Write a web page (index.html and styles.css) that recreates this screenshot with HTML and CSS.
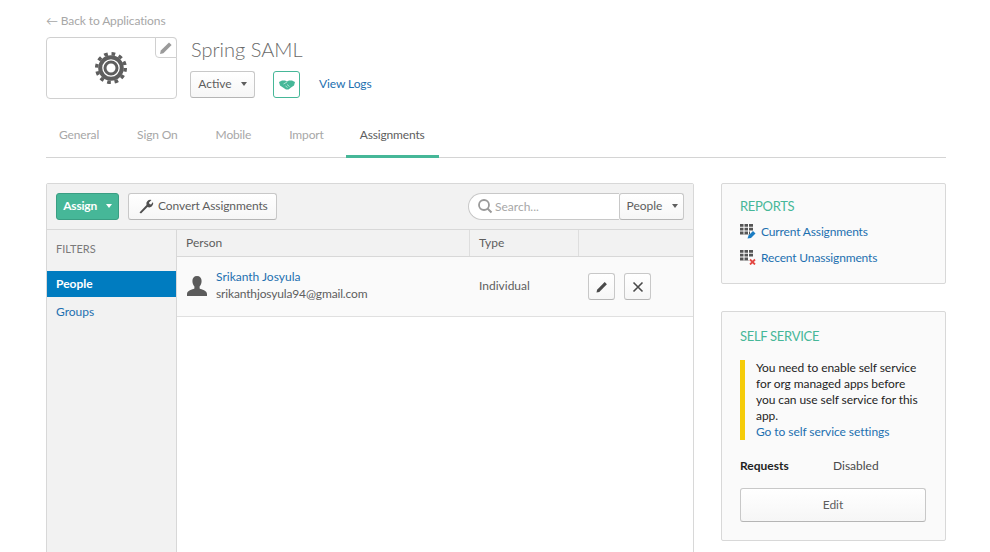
FILE: index.html
```html
<!DOCTYPE html>
<html lang="en">
<head>
    <meta charset="UTF-8">
    <title>Spring SAML - Assignments</title>
    <link rel="stylesheet" href="styles.css">
</head>
<body>
    <div class="page">
        <a class="back-link">&larr; Back to Applications</a>

        <div class="app-head">
            <div class="app-logo">
                <svg class="gear" width="32" height="32" viewBox="0 0 32 32">
                    <circle cx="16" cy="16" r="14.3" fill="none" stroke="#5e5e5e" stroke-width="3.4" stroke-dasharray="3.7 3.8"/>
                    <circle cx="16" cy="16" r="10.8" fill="none" stroke="#5e5e5e" stroke-width="4"/>
                    <circle cx="16" cy="16" r="6" fill="none" stroke="#5e5e5e" stroke-width="3"/>
                </svg>
                <span class="logo-edit">
                    <svg width="14" height="14" viewBox="0 0 14 14"><path d="M1 13l.8-3.400L10 1.400l2.600 2.600-8.200 8.200z" fill="#9a9a9a"/></svg>
                </span>
            </div>
            <div class="app-info">
                <h1>Spring SAML</h1>
                <div class="app-actions">
                    <button class="btn btn-status">Active <i class="caret"></i></button>
                    <span class="btn-hand">
                        <svg width="16" height="10" viewBox="0 0 16 10"><path d="M0 2L3 .5h3L8 1.500 10 .5h3L16 2l-1 3.500-3 2-2.500 2H7L4 7.500 1 5.500z" fill="#46b798"/><path d="M4.500 4L8 2M6.500 6l2 1.500M8 4.500l2.500 2" stroke="#bfe6da" stroke-width=".9" fill="none"/></svg>
                    </span>
                    <a class="link view-logs">View Logs</a>
                </div>
            </div>
        </div>

        <nav class="tabs">
            <a class="tab">General</a>
            <a class="tab">Sign On</a>
            <a class="tab">Mobile</a>
            <a class="tab">Import</a>
            <a class="tab active">Assignments</a>
        </nav>

        <div class="content">
            <section class="panel">
                <div class="toolbar">
                    <button class="btn btn-green">Assign <i class="caret"></i></button>
                    <button class="btn btn-convert">
                        <svg width="16" height="16" viewBox="0 0 16 16"><path d="M1.500 14.500l7-7.500a4 4 0 0 1 5-5L11 4.500l.5 1.500 1.500.5 2-2.500a4 4 0 0 1-5.500 5L3 15.500z" fill="#4f4f4f"/></svg>
                        Convert Assignments
                    </button>
                    <div class="search-group">
                        <div class="search">
                            <svg width="16" height="16" viewBox="0 0 16 16"><circle cx="7" cy="7" r="5" fill="none" stroke="#9a9a9a" stroke-width="1.800"/><path d="M10.500 10.500l4 4" stroke="#9a9a9a" stroke-width="2"/></svg>
                            <span>Search...</span>
                        </div>
                        <button class="btn btn-people">People <i class="caret"></i></button>
                    </div>
                </div>
                <div class="panel-body">
                    <aside class="filters">
                        <div class="filters-title">FILTERS</div>
                        <a class="filter active">People</a>
                        <a class="filter">Groups</a>
                    </aside>
                    <div class="table">
                        <div class="table-row table-header">
                            <div class="col-person">Person</div>
                            <div class="col-type">Type</div>
                            <div class="col-actions"></div>
                        </div>
                        <div class="table-row table-item">
                            <div class="col-person">
                                <svg class="person-icon" width="20" height="20" viewBox="0 0 20 20"><path d="M10 0c3 0 4.600 2 4.600 5 0 2.500-1 4.500-2 5.500v2c2 1 7.400 2 7.400 5.500v2H0v-2c0-3.500 5.400-4.500 7.400-5.500v-2c-1-1-2-3-2-5.500C5.400 2 7 0 10 0z" fill="#5b5b5b"/></svg>
                                <div class="person-text">
                                    <a class="link">Srikanth Josyula</a>
                                    <span>srikanthjosyula94@gmail.com</span>
                                </div>
                            </div>
                            <div class="col-type">Individual</div>
                            <div class="col-actions">
                                <span class="btn-icon"><svg width="14" height="14" viewBox="0 0 14 14"><path d="M1.500 12.500l.6-2.800 7.600-7.600 2.200 2.200-7.600 7.600z" fill="#4a4a4a"/></svg></span>
                                <span class="btn-icon"><svg width="14" height="14" viewBox="0 0 14 14"><path d="M2.500 2.500l9 9M11.500 2.500l-9 9" stroke="#4a4a4a" stroke-width="1.600"/></svg></span>
                            </div>
                        </div>
                    </div>
                </div>
            </section>

            <aside class="sidebar">
                <div class="card card-reports">
                    <h2>REPORTS</h2>
                    <a class="report-link">
                        <svg width="16" height="16" viewBox="0 0 16 16">
                            <path d="M0 1h13v2.800H0zM0 4.800h13v2.800H0zM0 8.600h10v2.800H0z" fill="#555"/>
                            <path d="M4 1v10.400M8.500 1v10.400" stroke="#fff" stroke-width="1"/>
                            <path d="M7.500 15.500l1-3 4.500-4.500 2.500 2.500-4.500 4.500z" fill="#1a7cc2"/>
                        </svg>
                        Current Assignments
                    </a>
                    <a class="report-link">
                        <svg width="16" height="16" viewBox="0 0 16 16">
                            <path d="M0 1h13v2.800H0zM0 4.800h13v2.800H0zM0 8.600h9v2.800H0z" fill="#555"/>
                            <path d="M4 1v10.400M8.500 1v10.400" stroke="#fff" stroke-width="1"/>
                            <path d="M10 10.500l5 5M15 10.500l-5 5" stroke="#e34843" stroke-width="1.800"/>
                        </svg>
                        Recent Unassignments
                    </a>
                </div>
                <div class="card card-self">
                    <h2>SELF SERVICE</h2>
                    <div class="notice">
                        You need to enable self service for org managed apps before you can use self service for this app.
                        <a class="link">Go to self service settings</a>
                    </div>
                    <div class="requests">
                        <strong>Requests</strong>
                        <span>Disabled</span>
                    </div>
                    <button class="btn btn-edit">Edit</button>
                </div>
            </aside>
        </div>
    </div>
</body>
</html>
```

FILE: styles.css
```css
html, body {
    height: 552px;
    overflow: hidden;
}
body {
    margin: 0;
    background-color: white;
    color: #5e5e5e;
    font-family: Lato, "Open Sans", sans-serif;
    font-size: 12px;
}
.page {
    width: 900px;
    padding: 13px 44px 0 46px;
}
.link, .report-link {
    color: #1d70b0;
}
.back-link {
    display: block;
    height: 24px;
    color: #a7a7a7;
    line-height: 15px;
    letter-spacing: -0.12px;
}

/* app header */
.app-head {
    display: flex;
    height: 62px;
}
.app-logo {
    position: relative;
    display: flex;
    align-items: center;
    justify-content: center;
    width: 129px;
    border: 1px solid #d0d0d0;
    border-radius: 4px;
}
.gear {
    margin-right: 2px;
}
.logo-edit {
    position: absolute;
    top: -1px;
    right: -1px;
    display: flex;
    align-items: center;
    justify-content: center;
    box-sizing: border-box;
    width: 22px;
    height: 21px;
    background-color: white;
    border: 1px solid #d0d0d0;
    border-radius: 0 4px 0 4px;
}
.app-info {
    margin-left: 13px;
}
.app-info h1 {
    margin: 0 0 9px 1px;
    color: #6a6a6a;
    font-size: 20px;
    font-weight: 300;
    line-height: 25px;
}
.app-actions {
    display: flex;
    align-items: center;
}
.btn {
    box-sizing: border-box;
    background: linear-gradient(#fff, #f6f6f6);
    border: 1px solid #c8c8c8;
    border-bottom-color: #b5b5b5;
    border-radius: 3px;
    color: #5e5e5e;
    font-family: inherit;
    font-size: 12px;
    padding: 0 0 2px;
}
.caret {
    display: inline-block;
    width: 0;
    height: 0;
    margin-left: 6px;
    vertical-align: 2px;
    border-top: 4px solid #5e5e5e;
    border-left: 3px solid transparent;
    border-right: 3px solid transparent;
}
.btn-status {
    width: 65px;
    height: 27px;
}
.btn-hand {
    display: flex;
    align-items: center;
    justify-content: center;
    box-sizing: border-box;
    width: 27px;
    height: 27px;
    margin-left: 18px;
    border: 1px solid #46b798;
    border-radius: 3px;
}
.view-logs {
    margin-left: 19px;
    margin-bottom: 2px;
    letter-spacing: -0.1px;
}

/* tabs */
.tabs {
    display: flex;
    height: 58px;
    border-bottom: 1px solid #d4d4d4;
}
.tab {
    box-sizing: border-box;
    height: 59px;
    margin-right: 12px;
    padding: 28px 13px 0;
    color: #a7a7a7;
    line-height: 15px;
    letter-spacing: -0.15px;
}
.tab.active {
    margin: 0 0 0 -3px;
    padding: 28px 14px 0;
    color: #5e5e5e;
    border-bottom: 3px solid #46b798;
}

/* main layout */
.content {
    display: flex;
    justify-content: space-between;
    margin-top: 25px;
}
.panel {
    box-sizing: border-box;
    width: 648px;
    height: 420px;
    border: 1px solid #d8d8d8;
    border-radius: 2px;
}
.toolbar {
    display: flex;
    align-items: center;
    height: 45px;
    padding: 0 9px;
    background-color: #f2f2f2;
    border-bottom: 1px solid #d8d8d8;
}
.btn-green {
    width: 63px;
    height: 27px;
    background: #46b798;
    border-color: #3a9e83;
    color: white;
    font-weight: 700;
    letter-spacing: -0.2px;
}
.btn-green .caret {
    border-top-color: white;
}
.btn-convert {
    display: flex;
    align-items: center;
    gap: 4px;
    width: 149px;
    height: 27px;
    margin-left: 9px;
    padding-left: 9px;
    letter-spacing: -0.1px;
    white-space: nowrap;
}
.search-group {
    display: flex;
    margin-left: auto;
}
.search {
    display: flex;
    align-items: center;
    gap: 2px;
    box-sizing: border-box;
    width: 151px;
    height: 27px;
    padding: 0 0 1px 8px;
    background-color: white;
    border: 1px solid #c8c8c8;
    border-right: 0;
    border-radius: 14px 0 0 14px;
    color: #a7a7a7;
}
.btn-people {
    width: 65px;
    height: 27px;
    padding-left: 1px;
}
.panel-body {
    display: flex;
    height: 350px;
}
.filters {
    width: 129px;
    background-color: #f2f2f2;
    border-right: 1px solid #d8d8d8;
}
.filters-title {
    height: 18px;
    margin-bottom: 12px;
    padding: 11px 9px 0;
    line-height: 15px;
    color: #7a7a7a;
    font-size: 11px;
}
.filter {
    display: block;
    height: 26px;
    margin-bottom: 2px;
    padding-left: 9px;
    color: #1d70b0;
    line-height: 26px;
}
.filter.active {
    background-color: #007cc0;
    color: white;
    font-weight: 700;
}
.table {
    flex: 1;
}
.table-row {
    display: flex;
    border-bottom: 1px solid #e0e0e0;
}
.col-person {
    box-sizing: border-box;
    width: 293px;
    padding-left: 9px;
}
.col-type {
    box-sizing: border-box;
    width: 109px;
    padding-left: 9px;
}
.col-actions {
    flex: 1;
}
.table-header {
    height: 26px;
    background-color: #f2f2f2;
    line-height: 25px;
    border-bottom-color: #d8d8d8;
}
.table-header .col-person, .table-header .col-type {
    border-right: 1px solid #dedede;
}
.table-item {
    align-items: center;
    height: 59px;
    background-color: #fafafa;
}
.table-item .col-person {
    display: flex;
    align-items: center;
    gap: 9px;
}
.person-icon {
    margin: 0 0 2px 1px;
}
.person-text {
    display: flex;
    flex-direction: column;
    gap: 2px;
    margin-bottom: 4px;
    line-height: 15px;
}
.person-text span {
    letter-spacing: -0.15px;
}
.table-item .col-type {
    margin-bottom: 2px;
}
.table-item .col-actions {
    display: flex;
    gap: 9px;
    padding-left: 9px;
}
.btn-icon {
    display: flex;
    align-items: center;
    justify-content: center;
    box-sizing: border-box;
    width: 27px;
    height: 27px;
    background: linear-gradient(#fff, #f6f6f6);
    border: 1px solid #c8c8c8;
    border-bottom-color: #b5b5b5;
    border-radius: 3px;
}

/* sidebar */
.sidebar {
    width: 225px;
}
.card {
    box-sizing: border-box;
    padding: 0 18px;
    background-color: #fafafa;
    border: 1px solid #d8d8d8;
    border-radius: 2px;
}
.card h2 {
    margin: 0;
    color: #46b798;
    font-size: 13px;
    font-weight: 400;
    line-height: 16px;
    letter-spacing: -0.3px;
}
.card-reports {
    height: 101px;
    padding-top: 14px;
}
.card-reports h2 {
    margin-bottom: 4px;
}
.report-link {
    display: flex;
    align-items: center;
    gap: 5px;
    height: 26px;
    letter-spacing: -0.15px;
}
.card-self {
    height: 230px;
    margin-top: 27px;
    padding-top: 16px;
}
.notice {
    box-sizing: border-box;
    height: 80px;
    margin-top: 16px;
    padding-left: 11px;
    border-left: 5px solid #f5cc0a;
    color: #1f1f1f;
    line-height: 16px;
    letter-spacing: -0.07px;
}
.notice .link {
    display: block;
}
.requests {
    display: flex;
    margin-top: 18px;
    line-height: 15px;
    color: #1f1f1f;
}
.requests strong {
    width: 93px;
}
.requests span {
    color: #4a4a4a;
}
.btn-edit {
    display: block;
    width: 186px;
    height: 34px;
    margin-top: 15px;
}
```
